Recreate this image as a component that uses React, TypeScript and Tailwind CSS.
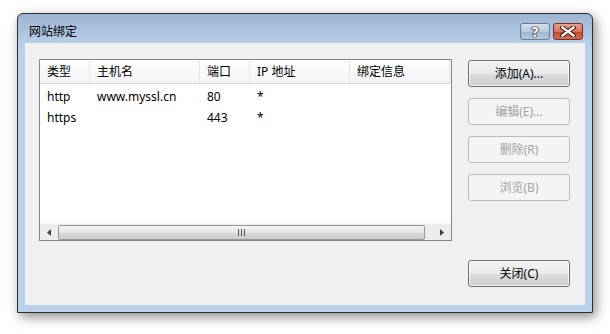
import React from "react";

const font = "font-['Noto_Sans','Noto_Sans_CJK_SC',sans-serif]";

const columns = [
  { label: "类型", w: "w-[50px]" },
  { label: "主机名", w: "w-[110px]" },
  { label: "端口", w: "w-[50px]" },
  { label: "IP 地址", w: "w-[100px]" },
  { label: "绑定信息", w: "w-[100px]" },
];

const rows = [
  ["http", "www.myssl.cn", "80", "*", ""],
  ["https", "", "443", "*", ""],
];

const DlgButton = ({ label, disabled = false }: { label: string; disabled?: boolean }) => (
  <div
    className={
      disabled
        ? "w-[102px] h-[27px] rounded-[3px] border border-[#b8bcc0] bg-[#f4f4f4] flex items-center justify-center text-[12px] text-[#a3a3a3]"
        : "w-[102px] h-[27px] rounded-[3px] border border-[#707070] bg-[linear-gradient(to_bottom,#f2f2f2_0%,#ebebeb_50%,#dddddd_51%,#cfcfcf_100%)] shadow-[inset_0_0_0_1px_rgba(255,255,255,0.7)] flex items-center justify-center text-[12px] text-black"
    }
  >
    {label}
  </div>
);

const App = () => {
  return (
    <div className={`w-[610px] h-[334px] bg-white pt-[13px] pl-[17px] ${font}`}>
      <div className="w-[576px] h-[300px] rounded-t-[6px] border border-[#2a2f36] bg-[linear-gradient(to_bottom,#9db5d2_0px,#b5cde7_28px,#b9d1ea_40px)] shadow-[3px_4px_12px_rgba(0,0,0,0.45)] flex flex-col">
        {/* title bar */}
        <div className="h-[29px] flex items-start justify-between pl-[11px] pr-[9px] pt-[9px]">
          <span className="text-[12px] leading-[17px] text-black">网站绑定</span>
          <div className="flex gap-[3px]">
            <div className="w-[30px] h-[17px] rounded-[3px] border border-[#6a7a90] bg-[linear-gradient(to_bottom,#d5e1ee_0%,#b8c9dd_50%,#9fb3cc_51%,#b5c8de_100%)] flex items-center justify-center">
              <span className="text-[14px] leading-none font-bold text-[#f4f4f4] font-['DejaVu_Sans',sans-serif] [text-shadow:0_0_1px_#222,0_0_1px_#222,0_0_1px_#222,0_0_1px_#222]">?</span>
            </div>
            <div className="w-[30px] h-[17px] rounded-[3px] border border-[#7d2c20] bg-[linear-gradient(to_bottom,#e8a493_0%,#d7725c_50%,#c2432a_51%,#d2705a_100%)] flex items-center justify-center">
              <svg width="16" height="11" viewBox="0 0 16 11">
                <path d="M2.5 1.5 L13.5 9.5 M13.5 1.5 L2.5 9.5" stroke="#3a1a14" strokeWidth="4.4" strokeLinecap="square" />
                <path d="M2.5 1.5 L13.5 9.5 M13.5 1.5 L2.5 9.5" stroke="#f6f6f6" strokeWidth="2.4" strokeLinecap="square" />
              </svg>
            </div>
          </div>
        </div>

        {/* client area */}
        <div className="mx-[7px] mb-[7px] flex-1 bg-[#f0f0f0] flex pl-[14px] pt-[16px] pb-[18px]">
          {/* list view */}
          <div className="w-[413px] h-[182px] border border-[#828790] bg-white flex flex-col">
            <div className="h-[24px] flex bg-[linear-gradient(to_bottom,#ffffff,#f3f4f6)] border-b border-[#d5d5d5] text-[12px] text-black">
              {columns.map((c) => (
                <div key={c.label} className={`${c.w} h-full flex items-center pl-[7px] border-r border-[#e3e5e8]`}>
                  {c.label}
                </div>
              ))}
            </div>
            <div className="flex-1 pt-[2px]">
              {rows.map((r, i) => (
                <div key={i} className="h-[21px] flex text-[12px] text-black">
                  {r.map((cell, j) => (
                    <div key={j} className={`${columns[j].w} pl-[7px] flex items-center`}>
                      {cell}
                    </div>
                  ))}
                </div>
              ))}
            </div>
            {/* horizontal scrollbar */}
            <div className="h-[17px] flex items-center bg-[#ececec] border-t border-[#f8f8f8]">
              <div className="w-[18px] h-full flex items-center justify-center">
                <svg width="4" height="7" viewBox="0 0 4 7">
                  <path d="M4 0 L0 3.5 L4 7 Z" fill="#404040" />
                </svg>
              </div>
              <div className="w-[367px] h-[15px] rounded-[2px] border border-[#979797] bg-[linear-gradient(to_bottom,#f3f3f3,#e5e5e5_50%,#d8d8d8_51%,#cbcbcb)] flex items-center justify-center">
                <div className="flex gap-[2px]">
                  <div className="w-[1px] h-[7px] bg-[#555]" />
                  <div className="w-[1px] h-[7px] bg-[#555]" />
                  <div className="w-[1px] h-[7px] bg-[#555]" />
                </div>
              </div>
              <div className="flex-1" />
              <div className="w-[18px] h-full flex items-center justify-center">
                <svg width="4" height="7" viewBox="0 0 4 7">
                  <path d="M0 0 L4 3.5 L0 7 Z" fill="#404040" />
                </svg>
              </div>
            </div>
          </div>

          {/* buttons */}
          <div className="ml-[16px] pt-[1px] flex flex-col">
            <div className="flex flex-col gap-[11px]">
              <DlgButton label="添加(A)..." />
              <DlgButton label="编辑(E)..." disabled />
              <DlgButton label="删除(R)" disabled />
              <DlgButton label="浏览(B)" disabled />
            </div>
            <div className="mt-auto">
              <DlgButton label="关闭(C)" />
            </div>
          </div>
        </div>
      </div>
    </div>
  );
};

export default App;
